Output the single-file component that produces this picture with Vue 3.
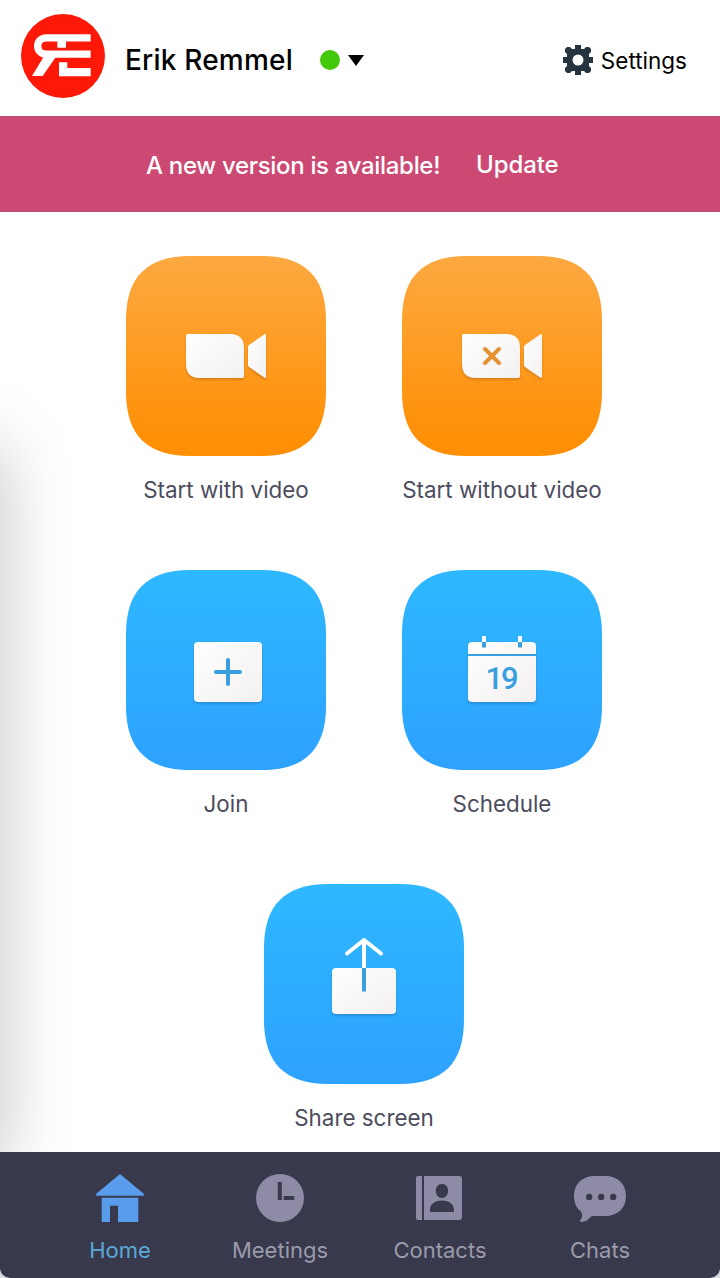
<script setup>
import { ref } from "vue";

const active = ref("home");

//main actions
const actions = [
  { id: "video", label: "Start with video", color: "orange" },
  { id: "novideo", label: "Start without video", color: "orange" },
  { id: "join", label: "Join", color: "blue" },
  { id: "schedule", label: "Schedule", color: "blue" },
  { id: "share", label: "Share screen", color: "blue" },
];

const tabs = [
  { id: "home", label: "Home" },
  { id: "meetings", label: "Meetings" },
  { id: "contacts", label: "Contacts" },
  { id: "chats", label: "Chats" },
];
</script>

<template>
  <div class="window">
    <header>
      <svg class="avatar" viewBox="63 42 252 252">
        <circle cx="189" cy="168" r="126" fill="#fe1808" />
        <path d="M272 113.500H140C104 113.500 104 162.500 140 162.500H272" fill="none" stroke="#fff" stroke-width="22" />
        <path d="M172 120h26v23h-26zM131 170h37l-40 58H96zM177 187h25v17h70v25h-95z" fill="#fff" />
      </svg>
      <h1><span class="name">Erik Remmel</span></h1>
      <button class="status">
        <i class="dot"></i>
        <svg width="16" height="11" viewBox="0 0 16 11"><path d="M0 0h16L8 11z" /></svg>
      </button>
      <button class="settings">
        <svg width="30" height="30" viewBox="0 0 30 30">
          <path fill="#263440" fill-rule="evenodd" d="M12 0h6v4h3l2-2h3l2 2v3l-2 2v3h4v6h-4v3l2 2v3l-2 2h-3l-2-2h-3v4h-6v-4H9l-2 2H4l-2-2v-3l2-2v-3H0v-6h4V9L2 7V4l2-2h3l2 2h3zM15 9.500a5.500 5.500 0 1 0 0 11a5.500 5.500 0 0 0 0-11z" />
        </svg>
        <span>Settings</span>
      </button>
    </header>

    <div class="banner">
      <span class="notice">A new version is available!</span>
      <button class="update">Update</button>
    </div>

    <main>
      <div class="edge-shadow"></div>
      <div class="actions">
        <button v-for="item in actions" :key="item.id" class="action">
          <svg class="tile" viewBox="0 0 200 200">
            <defs>
              <linearGradient :id="'bg-' + item.id" x1="0" y1="0" x2="0" y2="1">
                <stop offset="0" :stop-color="item.color == 'orange' ? '#fca941' : '#2eb8ff'" />
                <stop offset="0.930" :stop-color="item.color == 'orange' ? '#ff8f05' : '#2da3ff'" />
              </linearGradient>
              <linearGradient :id="'fg-' + item.id" x1="0" y1="0" x2="1" y2="1">
                <stop offset="0" stop-color="#fff" />
                <stop offset="1" stop-color="#f3f0f0" />
              </linearGradient>
            </defs>
            <path :fill="`url(#bg-${item.id})`"
              d="M0 64C0 21 21 0 64 0H136C179 0 200 21 200 64V136C200 179 179 200 136 200H64C21 200 0 179 0 136Z" />

            <g v-if="item.color == 'orange'" class="glyph" :fill="`url(#fg-${item.id})`">
              <path d="M62 78H104Q118 78 118 92V120Q118 122 116 122H74Q60 122 60 108V80Q60 78 62 78Z" />
              <path d="M122 91Q122 90 123 89L138.500 78.300Q140 77.500 140 79.500V120.500Q140 122.500 138.500 121.700L123 111Q122 110 122 109Z" />
            </g>
            <path v-if="item.id == 'novideo'" class="mark cross" d="M83 93L97 107M97 93L83 107" />

            <template v-if="item.id == 'join'">
              <rect class="glyph" x="68" y="72" width="68" height="60" rx="4" :fill="`url(#fg-${item.id})`" />
              <path class="mark" d="M90 102H114M102 90V114" />
            </template>

            <template v-if="item.id == 'schedule'">
              <rect class="glyph" x="66" y="72" width="68" height="60" rx="4" :fill="`url(#fg-${item.id})`" />
              <path d="M66 85H134" class="mark line" />
              <path d="M82 72V77.500M118 72V77.500" class="mark flat" />
              <path d="M80 72V67Q80 66 81 66H83Q84 66 84 67V72ZM116 72V67Q116 66 117 66H119Q120 66 120 67V72Z" fill="#fff" />
              <text class="day" x="100" y="119" text-anchor="middle" textLength="33" lengthAdjust="spacing">19</text>
            </template>

            <template v-if="item.id == 'share'">
              <rect class="glyph" x="68" y="84" width="64" height="46" rx="4" :fill="`url(#fg-${item.id})`" />
              <path d="M100 84V56M83 69.500L100 56L117 69.500" class="arrow" />
              <path d="M100 84V107.500" class="mark flat" />
            </template>
          </svg>
          <span class="label">{{ item.label }}</span>
        </button>
      </div>
    </main>

    <nav>
      <button v-for="tab in tabs" :key="tab.id" :class="['tab', { active: active == tab.id }]" @click="active = tab.id">
        <svg width="56" height="52" viewBox="0 0 56 52" fill="currentColor">
          <path v-if="tab.id == 'home'" d="M28 2L52 22V23.700H4V22ZM9.700 25.700H46.300V50H26V33.700H18V50H9.700Z" />
          <g v-if="tab.id == 'meetings'">
            <circle cx="28" cy="26" r="24" />
            <path d="M27.800 10V28M31.700 26H42.300" class="hands" />
          </g>
          <g v-if="tab.id == 'contacts'">
            <path d="M6 4H10V48H6Q4 48 4 46V6Q4 4 6 4ZM12 4H47Q50 4 50 7V45Q50 48 47 48H12Z" />
            <path class="hole" d="M30 12C38.500 12 38 26 30 26C22 26 21.500 12 30 12ZM18 37.500C18 25.500 42 25.500 42 37.500V38.500Q42 40 40.500 40H19.500Q18 40 18 38.500Z" />
          </g>
          <g v-if="tab.id == 'chats'">
            <path d="M23 4H33C46 4 54 12 54 24S46 44 33 44H20C17 46 15 50 9 50C7.500 50 8 48.500 9 47C10.500 44.500 10.500 42 9 39.500C4 36 2 30 2 24C2 12 10 4 23 4Z" />
            <path class="hole" d="M14 25a3.200 3.200 0 1 0 6.400 0a3.200 3.200 0 1 0-6.400 0M26 25a3.200 3.200 0 1 0 6.400 0a3.200 3.200 0 1 0-6.400 0M38 25a3.200 3.200 0 1 0 6.400 0a3.200 3.200 0 1 0-6.400 0" />
          </g>
        </svg>
        <span>{{ tab.label }}</span>
      </button>
    </nav>
  </div>
</template>

<style>
body {
  margin: 0;
  background: #dcdce4;
}
</style>

<style scoped>
.window {
  width: 720px;
  height: 1278px;
  display: flex;
  flex-direction: column;
  background: #fff;
  border-radius: 0 0 10px 10px;
  overflow: hidden;
  font-family: Inter, "Liberation Sans", sans-serif;
}

button {
  border: none;
  padding: 0;
  margin: 0;
  background: none;
  font-family: inherit;
  color: inherit;
}

span {
  white-space: nowrap;
}

header {
  height: 116px;
  flex-shrink: 0;
  box-sizing: border-box;
  display: flex;
  align-items: center;
  padding: 4px 33px 0 21px;
  color: #000;
}

.avatar {
  width: 84px;
  height: 84px;
  margin-top: -8px;
}

h1 {
  width: 168px;
  margin: 0 0 0 20px;
  font-size: 28px;
  line-height: 36px;
  font-weight: 500;
}

.name {
  letter-spacing: 0.200px;
}

.status {
  display: flex;
  align-items: center;
  gap: 8px;
  margin-left: 27px;
}

.dot {
  width: 20px;
  height: 20px;
  border-radius: 50%;
  background: #43c80c;
}

.settings {
  display: flex;
  align-items: center;
  gap: 8px;
  margin-left: auto;
  font-size: 22.500px;
}

.banner {
  height: 96px;
  flex-shrink: 0;
  box-sizing: border-box;
  display: flex;
  align-items: center;
  padding: 0 0 0 146px;
  background: #cc4974;
  border-top: 1px solid #bd4a6e;
  border-bottom: 1px solid #bd4a6e;
  color: #fff;
  font-size: 24px;
  font-weight: 500;
}

.notice {
  width: 330px;
  padding-top: 3px;
  letter-spacing: -0.320px;
}

.update {
  font-size: 24px;
  font-weight: 500;
  letter-spacing: -0.100px;
}

main {
  position: relative;
  flex: 1;
  min-height: 0;
  overflow: hidden;
}

/* shadow coming from the window beside this one */
.edge-shadow {
  position: absolute;
  left: -60px;
  top: 236px;
  width: 60px;
  height: 720px;
  box-shadow: 0 0 70px rgba(0, 0, 0, 0.260);
}

.actions {
  position: relative;
  width: 552px;
  margin: 0 auto;
  padding: 44px 0 0 8px;
  display: flex;
  flex-wrap: wrap;
  justify-content: center;
}

.action {
  width: 276px;
  height: 314px;
  display: flex;
  flex-direction: column;
  align-items: center;
  color: #4c4c5e;
}

.tile {
  width: 200px;
  height: 200px;
}

.glyph {
  filter: drop-shadow(0 2px 1px rgba(0, 0, 0, 0.150));
}

.mark {
  fill: none;
  stroke: #3a9fdf;
  stroke-width: 4;
  stroke-linecap: round;
}

.cross {
  stroke: #e59332;
}

.line {
  stroke-width: 2;
  stroke-linecap: butt;
}

.flat {
  stroke-linecap: butt;
}

.arrow {
  fill: none;
  stroke: #fff;
  stroke-width: 4;
  stroke-linejoin: round;
  stroke-linecap: round;
}

.day {
  font-family: Roboto, sans-serif;
  font-size: 31px;
  font-weight: 500;
  fill: #3a9fdf;
}

.label {
  margin-top: 20px;
  font-size: 22.400px;
  line-height: 28px;
}

nav {
  height: 126px;
  flex-shrink: 0;
  display: flex;
  justify-content: center;
  background: #39394d;
}

.tab {
  width: 160px;
  display: flex;
  flex-direction: column;
  align-items: center;
  padding-top: 20px;
  color: #8d8ba5;
  font-size: 22px;
  line-height: 28px;
}

.tab span {
  margin-top: 12px;
  color: #9b9bab;
}

.active {
  color: #5a9cec;
}

.tab.active span {
  color: #59a9d9;
}

.hands {
  stroke: #39394d;
  stroke-width: 4;
}

.hole {
  fill: #39394d;
}
</style>
